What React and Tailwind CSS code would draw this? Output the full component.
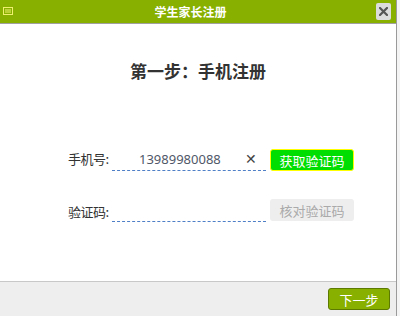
export default function App() {
  const cjk = { fontFamily: '"Noto Sans CJK SC", "Noto Sans", sans-serif' };
  return (
    <div className="w-[400px] h-[316px] bg-[#f4f4f4] flex" style={cjk}>
      <div className="w-[397px] h-full flex flex-col bg-white border-r border-[#9a9a9a]">
        <div className="relative h-[24px] bg-[#88b000] border-b border-[#a0a0a0] flex items-center justify-center">
          <svg className="absolute left-[3px] top-[7px]" width="10" height="8" viewBox="0 0 10 8">
            <rect x="0.5" y="0.5" width="9" height="7" fill="none" stroke="#f0f070" strokeWidth="1" />
            <line x1="2" y1="3" x2="8" y2="3" stroke="#f0f070" strokeWidth="1" />
            <line x1="2" y1="5" x2="8" y2="5" stroke="#f0f070" strokeWidth="1" />
          </svg>
          <span className="text-white text-[12px] font-bold leading-none -ml-[15px]">学生家长注册</span>
          <div className="absolute right-[5px] top-[3px] w-[15px] h-[17px] bg-[#dcdcdc] rounded-[2px] flex items-center justify-center">
            <svg width="9" height="9" viewBox="0 0 9 9">
              <path d="M1 1 L8 8 M8 1 L1 8" stroke="#555" strokeWidth="2.2" strokeLinecap="square" />
            </svg>
          </div>
        </div>
        <div className="flex-1 flex flex-col">
          <div className="mt-[36px] text-center text-[17px] font-bold text-[#333] leading-[22px]">第一步：手机注册</div>
          <div className="mt-[67px] flex items-end pl-[68px]">
            <span className="w-[44px] text-[13px] text-[#333] leading-[16px] mb-[4px] tracking-[-0.5px]">手机号:</span>
            <div className="w-[154px] h-[22px] border-b border-dashed border-[#4f7fc6] relative flex items-center">
              <span className="ml-[27px] text-[13px] text-[#505868] leading-none" style={{ fontFamily: '"Noto Sans", sans-serif' }}>13989980088</span>
              <span className="absolute right-[9px] top-[2px] text-[14px] text-[#444] leading-none">✕</span>
            </div>
            <button className="ml-[4px] w-[84px] h-[22px] bg-[#00dd00] border border-[#ffff00] rounded-[3px] text-white text-[13px] leading-none">获取验证码</button>
          </div>
          <div className="mt-[28px] flex items-end pl-[68px]">
            <span className="w-[44px] text-[13px] text-[#333] leading-[16px] mb-[2px] tracking-[-0.5px]">验证码:</span>
            <div className="w-[154px] h-[22px] border-b border-dashed border-[#4f7fc6]"></div>
            <button className="ml-[4px] w-[84px] h-[22px] bg-[#eeeeee] rounded-[3px] text-[#aaa] text-[13px] leading-none mb-[1px]">核对验证码</button>
          </div>
        </div>
        <div className="h-[35px] bg-[#eeeeee] border-t border-[#c8c8c8] flex items-center justify-end pr-[6px]">
          <button className="w-[62px] h-[22px] bg-[#88b000] border border-[#5c7a00] rounded-[3px] text-white text-[13px] leading-none">下一步</button>
        </div>
      </div>
    </div>
  );
}
